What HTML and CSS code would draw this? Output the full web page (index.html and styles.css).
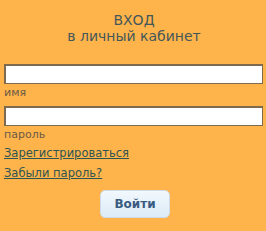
FILE: index.html
```html
<!DOCTYPE html>
<html lang="ru">
<head>
<meta charset="UTF-8">
<title>Вход</title>
<link rel="stylesheet" href="styles.css">
</head>
<body>
<div class="login">
    <h1 class="title">ВХОД<br>в личный кабинет</h1>
    <form class="login_form">
        <input type="text" class="field">
        <label class="field_label">имя</label>
        <input type="password" class="field">
        <label class="field_label">пароль</label>
        <div class="links">
            <a href="#">Зарегистрироваться</a>
            <a href="#">Забыли пароль?</a>
        </div>
        <div class="submit_row">
            <button type="button" class="btn">Войти</button>
        </div>
    </form>
</div>
</body>
</html>
```

FILE: styles.css
```css
* {
    margin: 0;
    padding: 0;
    box-sizing: border-box;
}

body {
    background: #ffb34b;
    font-family: "DejaVu Sans", Verdana, sans-serif;
}

.login {
    padding: 12px 4px 0 4px;
}

.title {
    text-align: center;
    font-weight: normal;
    font-size: 14px;
    line-height: 16px;
    color: #44585a;
    padding-left: 2px;
}

.login_form {
    display: flex;
    flex-direction: column;
    margin-top: 20px;
}

.field {
    width: 259px;
    height: 20px;
    background: #fff;
    border: 1px solid #7d6a4f;
    border-top-width: 2px;
    border-left-width: 2px;
    outline: none;
}

.field_label {
    font-size: 11px;
    line-height: 13px;
    color: #6a5b45;
    margin-top: 2px;
    margin-bottom: 7px;
}

.links {
    display: flex;
    flex-direction: column;
    row-gap: 6px;
    margin-top: -2px;
}

.links a {
    font-size: 11.5px;
    line-height: 14px;
    color: #2e5552;
}

.submit_row {
    display: flex;
    justify-content: center;
    margin-top: 10px;
}

.btn {
    width: 70px;
    height: 28px;
    margin-left: 4px;
    border: 1px solid #cfdbe6;
    border-radius: 5px;
    background: linear-gradient(#f2f8fd, #dcebf7);
    font-family: "DejaVu Sans", Verdana, sans-serif;
    font-weight: bold;
    font-size: 12px;
    color: #3a5b80;
}
```
